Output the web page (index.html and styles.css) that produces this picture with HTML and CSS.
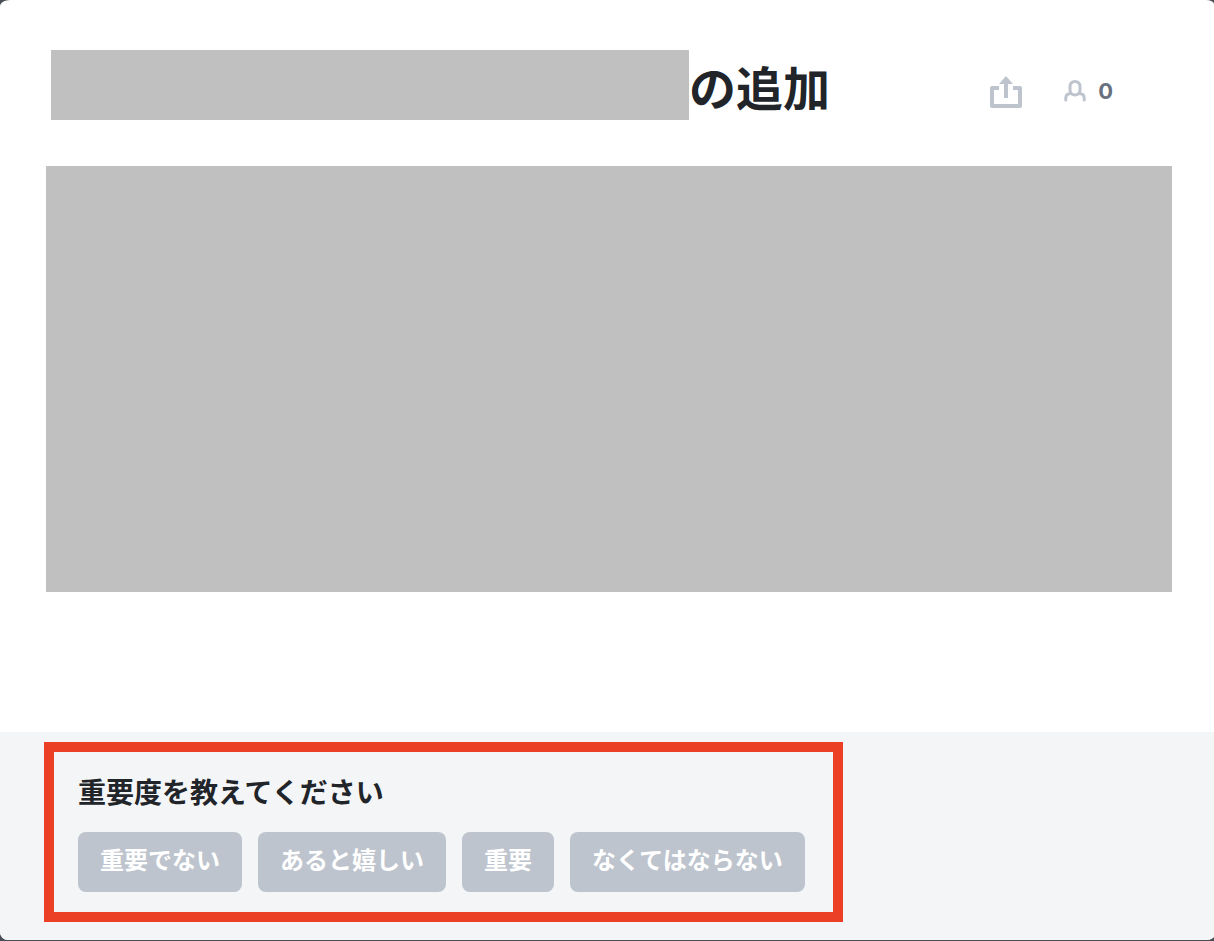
FILE: index.html
```html
<!DOCTYPE html>
<html lang="ja">
<head>
<meta charset="utf-8">
<meta name="viewport" content="width=device-width, initial-scale=1">
<title>の追加</title>
<link rel="stylesheet" href="styles.css">
</head>
<body>
<main class="card">
  <header class="header">
    <div class="heading">
      <span class="redacted-title"></span>
      <h1 class="title">の追加</h1>
    </div>
    <div class="actions">
      <button class="icon-button" type="button" aria-label="共有">
        <svg width="32" height="32" viewBox="0 0 32 32" fill="none">
          <path d="M9 12H2V30H30V12H23" stroke="currentColor" stroke-width="4" stroke-linejoin="round"/>
          <path d="M16 22V6" stroke="currentColor" stroke-width="4"/>
          <path d="M9 8L16 0L23 8Z" fill="currentColor"/>
        </svg>
      </button>
      <button class="icon-button voters" type="button">
        <svg width="22" height="22" viewBox="0 0 22 22" fill="none" stroke="currentColor" stroke-width="3" stroke-linecap="round">
          <path d="M11 1.5C8 1.5 6 3.500 6 6.500V10C6 13 8 15 11 15S16 13 16 10V6.500C16 3.500 14 1.500 11 1.500Z"/>
          <path d="M1.800 20V18C1.800 15 3.500 13.500 7 13.500M20.200 20V18C20.200 15 18.500 13.500 15 13.500"/>
        </svg>
        <span class="count">0</span>
      </button>
    </div>
  </header>
  <div class="redacted-body"></div>
  <footer class="footer">
    <section class="importance" aria-labelledby="question">
      <h2 class="question" id="question">重要度を教えてください</h2>
      <div class="choices">
        <button class="choice" type="button">重要でない</button>
        <button class="choice" type="button">あると嬉しい</button>
        <button class="choice" type="button">重要</button>
        <button class="choice" type="button">なくてはならない</button>
      </div>
    </section>
  </footer>
</main>
</body>
</html>
```
FILE: styles.css
```css
* {
  box-sizing: border-box;
}

body {
  margin: 0;
  min-height: 100vh;
  padding-bottom: 1px;
  display: flex;
  background: #494d55;
  color: #212429;
  font-family: Inter, "Noto Sans CJK JP", sans-serif;
}

.card {
  flex: 1;
  min-width: 0;
  display: flex;
  flex-direction: column;
  background: #fff;
  border-radius: 10px 8px 8px 8px / 6px 4px 4px 8px;
  overflow: hidden;
}

.header {
  display: flex;
  align-items: center;
  justify-content: space-between;
  padding: 50px 101px 0 51px;
}

.heading {
  flex: 1;
  display: flex;
  align-items: flex-start;
}

.redacted-title {
  flex: 0 1 638px;
  height: 70px;
  background: #c0c0c0;
}

.title {
  height: 70px;
  margin: 0;
  padding-top: 4px;
  font-size: 47px;
  line-height: 70px;
  font-weight: 700;
  white-space: nowrap;
}

.actions {
  display: flex;
  align-items: center;
  gap: 42px;
  padding-top: 14px;
}

.icon-button {
  display: flex;
  align-items: center;
  padding: 0;
  border: 0;
  background: none;
  color: #bdc4cd;
  font-family: inherit;
}

.icon-button svg {
  display: block;
}

.voters {
  gap: 12px;
  padding-bottom: 2px;
}

.count {
  color: #69707d;
  font-size: 22px;
  line-height: 28px;
  font-weight: 700;
}

.redacted-body {
  flex: 1 0 426px;
  margin: 46px 42px 140px 46px;
  background: #c0c0c0;
}

.footer {
  display: flex;
  padding: 10px 44px 18px;
  background: #f3f5f7;
}

.importance {
  padding: 20px 28px 20px 24px;
  border: 10px solid #eb4026;
}

.question {
  margin: 0 0 18px;
  font-size: 28px;
  line-height: 42px;
  font-weight: 700;
}

.choices {
  display: flex;
  flex-wrap: wrap;
  gap: 16px;
}

.choice {
  height: 60px;
  padding: 0 22px 2px;
  border: 0;
  border-radius: 8px;
  background: #bdc4cd;
  color: #fff;
  font-family: inherit;
  font-size: 24px;
  line-height: 36px;
  font-weight: 700;
}
```
